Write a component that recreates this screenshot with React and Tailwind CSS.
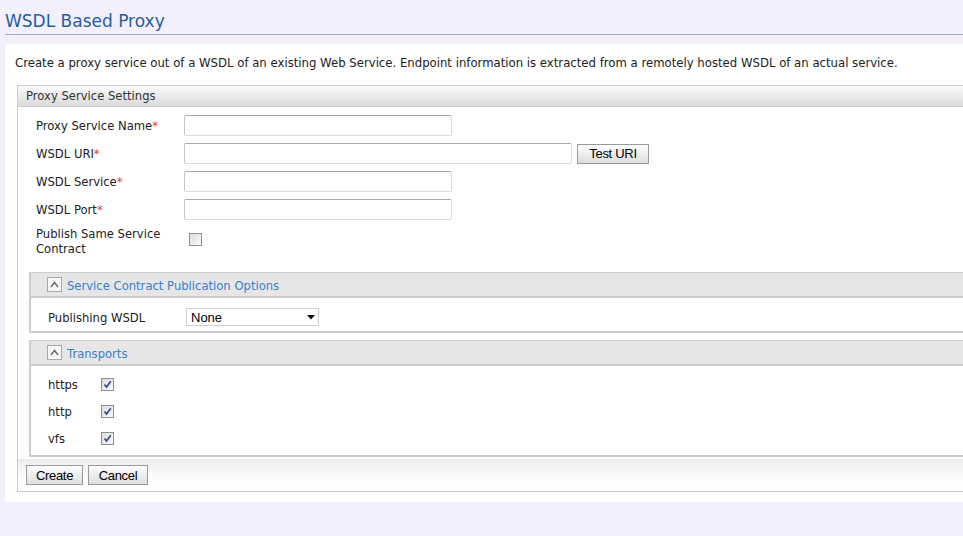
import { useState } from 'react';

const font = { fontFamily: '"DejaVu Sans", Verdana, sans-serif' };

const Req = () => <span className="text-[#e0453e]">*</span>;

const TextInput = ({ w = 'w-[268px]' }) => (
    <input
        type="text"
        className={`${w} h-[21px] rounded-[2px] border border-[#dcdcdc] border-t-[#a9a9a9] border-l-[#c4c4c4] bg-white px-1 text-[12px] outline-none`}
    />
);

const Box = ({ checked }) => (
    <span className="inline-flex h-[13px] w-[13px] items-center justify-center border border-[#8f8f8f] bg-gradient-to-br from-[#dcdcdc] to-[#fbfbfb]">
        {checked && (
            <svg width="9" height="9" viewBox="0 0 9 9">
                <path d="M1.5 4.5 L3.5 7 L7.8 1.2" stroke="#3d4f9e" strokeWidth="1.8" fill="none" />
            </svg>
        )}
    </span>
);

const GrayButton = ({ children, className = '' }) => (
    <button
        className={`h-[20px] border border-[#9a9a9a] bg-gradient-to-b from-[#fdfdfd] to-[#dedede] text-[13px] leading-none tracking-[-0.3px] text-black ${className}`}
        style={{ fontFamily: '"Liberation Sans", Arial, sans-serif' }}
    >
        {children}
    </button>
);

const Section = ({ title, children }) => (
    <div className="ml-[11px] border-2 border-r-0 border-t-1 border-[#cccccc]">
        <div className="flex h-[25px] items-center gap-[5px] border-b-2 border-[#cccccc] bg-[#e6e6e6] pl-[16px]">
            <span className="flex h-[15px] w-[15px] items-center justify-center border border-[#a8a8a8] bg-[#f7f7f7]">
                <svg width="9" height="7" viewBox="0 0 9 7">
                    <path d="M1 6 L4.5 1.5 L8 6" stroke="#6b6b6b" strokeWidth="1.5" fill="none" />
                </svg>
            </span>
            <span className="pt-[4px] text-[11.6px] text-[#3a7ec6]">{title}</span>
        </div>
        {children}
    </div>
);

const Row = ({ label, children }) => (
    <div className="flex h-[21px] items-center">
        <label className="w-[148px] pt-[2px] leading-[15px]">{label}<Req /></label>
        {children}
    </div>
);

export default function App() {
    const [transports] = useState(['https', 'http', 'vfs']);

    return (
        <div className="min-h-[536px] w-full overflow-hidden bg-[#f4effc] text-[#222]" style={font}>
            <div className="ml-[5px] h-[35px] border-b border-[#9fb1d6] pt-[9px] text-[17px] leading-[24px] text-[#24609d]">
                WSDL Based Proxy
            </div>

            <div className="ml-[5px] mt-[9px] w-[1000px] bg-white pb-[10px]">
                <p className="h-[41px] pl-[10px] pt-[11px] text-[11.7px] leading-[16px]">
                    Create a proxy service out of a WSDL of an existing Web Service. Endpoint information is extracted from a remotely hosted WSDL of an actual service.
                </p>

                <div className="ml-[12px] border border-r-0 border-[#cccccc]">
                    <div className="flex h-[21px] items-center border-b border-[#cccccc] bg-gradient-to-b from-[#fbfbfb] to-[#dadada] pl-[8px] pt-[2px] text-[11.6px] text-[#333]">
                        Proxy Service Settings
                    </div>

                    <div className="flex flex-col gap-[7px] pl-[18px] pt-[8px] text-[11.6px]">
                        <Row label="Proxy Service Name"><TextInput /></Row>
                        <Row label="WSDL URI">
                            <TextInput w="w-[388px]" />
                            <GrayButton className="ml-[5px] w-[72px]">Test URI</GrayButton>
                        </Row>
                        <Row label="WSDL Service"><TextInput /></Row>
                        <Row label="WSDL Port"><TextInput /></Row>
                        <div className="flex items-center">
                            <label className="w-[148px] leading-[15px]">Publish Same Service Contract</label>
                            <span className="ml-[5px]"><Box /></span>
                        </div>
                    </div>

                    <div className="mt-[15px]">
                        <Section title="Service Contract Publication Options">
                            <div className="flex h-[33px] items-start pl-[17px] pt-[10px] text-[11.6px]">
                                <span className="w-[138px] pt-[2px]">Publishing WSDL</span>
                                <div className="relative flex h-[18px] w-[133px] items-center border border-[#cfcfcf] bg-white pl-[4px] pt-[1px] text-[13px] text-black" style={{ fontFamily: '"Liberation Sans", Arial, sans-serif' }}>
                                    None
                                    <svg className="absolute right-[3px] top-[6px]" width="8" height="5" viewBox="0 0 8 5">
                                        <path d="M0 0 H8 L4 4.5 Z" fill="#111" />
                                    </svg>
                                </div>
                            </div>
                        </Section>
                    </div>

                    <div className="mt-[7px]">
                        <Section title="Transports">
                            <div className="flex flex-col gap-[14px] pb-[10px] pl-[17px] pt-[12px] text-[11.6px]">
                                {transports.map((t) => (
                                    <div key={t} className="flex h-[13px] items-center">
                                        <span className="w-[53px] pt-[2px]">{t}</span>
                                        <Box checked />
                                    </div>
                                ))}
                            </div>
                        </Section>
                    </div>

                    <div className="mt-[2px] flex h-[32px] items-center gap-[5px] bg-gradient-to-b from-[#ececec] via-[#fbfbfb] to-white pl-[8px]">
                        <GrayButton className="w-[57px]">Create</GrayButton>
                        <GrayButton className="w-[60px]">Cancel</GrayButton>
                    </div>
                </div>
            </div>
        </div>
    );
}
